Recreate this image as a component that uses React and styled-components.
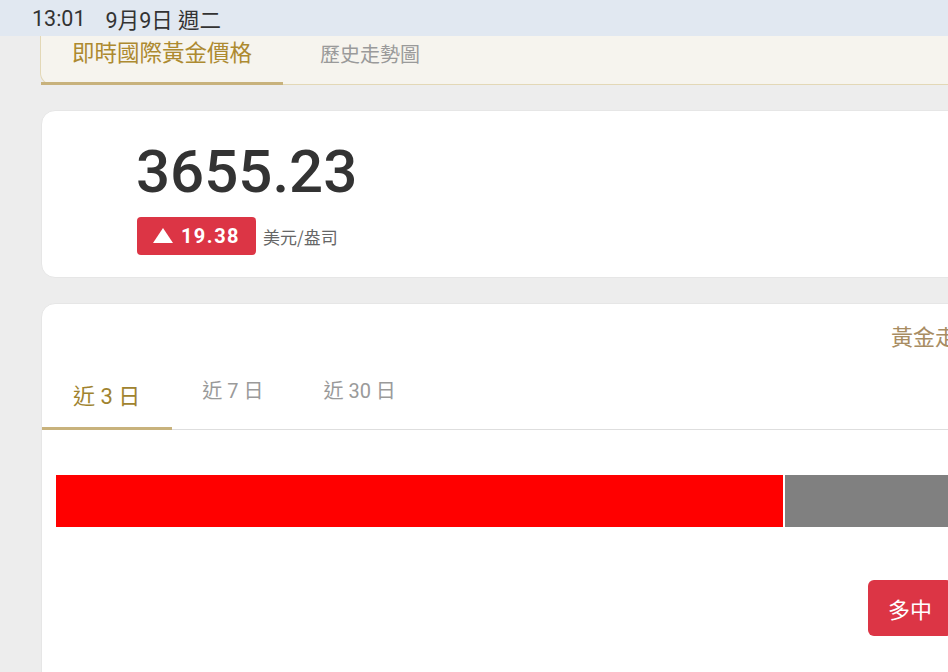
import styled, { createGlobalStyle } from "styled-components"

const GlobalStyle = createGlobalStyle`
    html, body {
        margin: 0;
        padding: 0;
        background-color: #ededed;
        overflow: hidden;
    }
    body {
        font-family: Roboto, "Noto Sans CJK TC", sans-serif;
    }
`

const tabs = ['即時國際黃金價格', '歷史走勢圖']
const ranges = ['近 3 日', '近 7 日', '近 30 日']

export default function App() {
    return (
        <>
            <GlobalStyle />
            <SCStatusBar>
                <span>13:01</span>
                <span>9月9日 週二</span>
            </SCStatusBar>
            <SCPage>
                <SCTopTabs>
                    {tabs.map((t, i) => (
                        <SCTopTab key={t} $active={i === 0}>{t}</SCTopTab>
                    ))}
                </SCTopTabs>

                <SCPriceCard>
                    <SCPrice>3655.23</SCPrice>
                    <SCChangeRow>
                        <SCBadge>
                            <svg width="20" height="15" viewBox="0 0 20 15">
                                <polygon points="10,0 20,15 0,15" fill="#fff" />
                            </svg>
                            19.38
                        </SCBadge>
                        <SCUnit>美元/盎司</SCUnit>
                    </SCChangeRow>
                </SCPriceCard>

                <SCChartCard>
                    <SCChartHeader>
                        <SCChartTitle>黃金走勢</SCChartTitle>
                    </SCChartHeader>
                    <SCRangeTabs>
                        {ranges.map((r, i) => (
                            <SCRangeTab key={r} $active={i === 0}>{r}</SCRangeTab>
                        ))}
                    </SCRangeTabs>
                    <SCBar>
                        <SCBarPart $color="#ff0000" style={{ width: 727 }} />
                        <SCBarPart $color="#808080" style={{ flex: 1 }} />
                    </SCBar>
                    <SCButtonRow>
                        <SCButton>多中</SCButton>
                    </SCButtonRow>
                </SCChartCard>
            </SCPage>
        </>
    )
}

const SCStatusBar = styled.div`
    height: 36px;
    padding-left: 32px;

    display: flex;
    align-items: center;
    gap: 20px;

    background-color: #e1e8f1;
    color: #333;
    font-size: 21.5px;
    font-family: Roboto, "Noto Sans CJK TC", sans-serif;

    position: relative;
    z-index: 2;
`

const SCPage = styled.div`
    width: 1000px;
    padding-left: 40px;

    display: flex;
    flex-direction: column;
`

const SCTopTabs = styled.div`
    height: 48px;

    display: flex;
    align-items: stretch;

    background-color: #f6f4ee;
    border: 1px solid #e3d8b6;
    border-top: none;
    border-bottom-left-radius: 12px;
`

const SCTopTab = styled.div`
    padding: ${p => p.$active ? '0 31px 0 31px' : '3px 37px 0 37px'};

    display: flex;
    align-items: flex-start;

    font-family: "Noto Sans CJK TC", sans-serif;
    font-size: ${p => p.$active ? '22.5px' : '20px'};
    line-height: 30px;
    color: ${p => p.$active ? '#ad8a30' : '#9a9a9a'};

    border-bottom: 3px solid ${p => p.$active ? '#c8b27c' : 'transparent'};
    margin-bottom: -1px;
`

const SCPriceCard = styled.div`
    margin-top: 25px;
    margin-left: 1px;
    height: 168px;
    padding: 28px 0 0 94px;
    box-sizing: border-box;

    display: flex;
    flex-direction: column;

    background-color: #fff;
    border-radius: 14px;
    border: 1px solid #e6e6e6;
`

const SCPrice = styled.div`
    font-family: Roboto, sans-serif;
    font-size: 60px;
    font-weight: 500;
    line-height: 66px;
    color: #333;
`

const SCChangeRow = styled.div`
    margin-top: 12px;

    display: flex;
    align-items: center;
    gap: 7px;
`

const SCBadge = styled.div`
    width: 119px;
    height: 38px;
    box-sizing: border-box;
    margin-left: 1px;

    display: flex;
    align-items: center;
    justify-content: center;
    gap: 8px;

    background-color: #dc3545;
    border-radius: 4px;

    color: #fff;
    font-family: Roboto, sans-serif;
    font-size: 20px;
    font-weight: 700;
    letter-spacing: 1.5px;

    svg {
        margin-top: -1px;
    }
`

const SCUnit = styled.span`
    font-family: "Noto Sans CJK TC", sans-serif;
    font-size: 17px;
    color: #666;
`

const SCChartCard = styled.div`
    margin-top: 25px;
    margin-left: 1px;
    height: 400px;

    display: flex;
    flex-direction: column;

    background-color: #fff;
    border-radius: 14px;
    border: 1px solid #e6e6e6;
`

const SCChartHeader = styled.div`
    height: 47px;
    padding-left: 849px;

    display: flex;
    align-items: flex-end;
`

const SCChartTitle = styled.div`
    font-family: "Noto Sans CJK TC", sans-serif;
    font-size: 22px;
    line-height: 32px;
    color: #a88c62;
    white-space: nowrap;
`

const SCRangeTabs = styled.div`
    height: 78px;

    display: flex;
    align-items: stretch;

    border-bottom: 1px solid #dedede;
`

const SCRangeTab = styled.div`
    padding: ${p => p.$active ? '9px 32px 0 31px' : '0 30px'};

    display: flex;
    align-items: center;

    font-family: Roboto, "Noto Sans CJK TC", sans-serif;
    font-size: ${p => p.$active ? '22px' : '20px'};
    color: ${p => p.$active ? '#a0832f' : '#9a9a9a'};

    border-bottom: 3px solid ${p => p.$active ? '#c8b27c' : 'transparent'};
    margin-bottom: -1px;
`

const SCBar = styled.div`
    height: 52px;
    margin: 45px 0 0 14px;

    display: flex;
    gap: 2px;
`

const SCBarPart = styled.div`
    height: 100%;
    background-color: ${p => p.$color};
`

const SCButtonRow = styled.div`
    margin-top: 53px;
    padding-left: 826px;

    display: flex;
`

const SCButton = styled.div`
    width: 84px;
    height: 56px;
    box-sizing: border-box;
    padding-left: 20px;

    display: flex;
    align-items: center;

    background-color: #dc3545;
    border-radius: 6px;

    color: #fff;
    font-family: "Noto Sans CJK TC", sans-serif;
    font-size: 22px;
`
